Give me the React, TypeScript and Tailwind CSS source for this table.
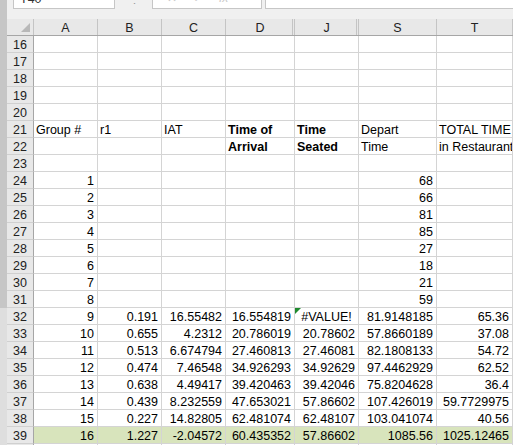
import React from 'react';

type Cell = { v: string; align?: 'l' | 'r' | 'c'; bold?: boolean; err?: boolean };
type Row = { n: number; green?: boolean; cells: Partial<Record<ColKey, Cell>> };
type ColKey = 'A' | 'B' | 'C' | 'D' | 'J' | 'S' | 'T';

const columns: { key: ColKey; w: string; head: string }[] = [
  { key: 'A', w: 'w-[64px]', head: '' },
  { key: 'B', w: 'w-[64px]', head: '' },
  { key: 'C', w: 'w-[64px]', head: '' },
  { key: 'D', w: 'w-[69px]', head: 'shadow-[inset_-1px_0_0_#e8e8e8,inset_-2px_0_0_#c4c4c4]' },
  { key: 'J', w: 'w-[64px]', head: 'shadow-[inset_-1px_0_0_#e8e8e8,inset_-2px_0_0_#c4c4c4]' },
  { key: 'S', w: 'w-[78px]', head: '' },
  { key: 'T', w: 'flex-1 min-w-0', head: '' },
];

const r = (v: string): Cell => ({ v, align: 'r' });
const l = (v: string): Cell => ({ v, align: 'l' });
const b = (v: string): Cell => ({ v, align: 'l', bold: true });

const numbered = [68, 66, 81, 85, 27, 18, 21, 59];

const data: [string, string, string, string, string, string, string][] = [
  ['9', '0.191', '16.55482', '16.554819', '#VALUE!', '81.9148185', '65.36'],
  ['10', '0.655', '4.2312', '20.786019', '20.78602', '57.8660189', '37.08'],
  ['11', '0.513', '6.674794', '27.460813', '27.46081', '82.1808133', '54.72'],
  ['12', '0.474', '7.46548', '34.926293', '34.92629', '97.4462929', '62.52'],
  ['13', '0.638', '4.49417', '39.420463', '39.42046', '75.8204628', '36.4'],
  ['14', '0.439', '8.232559', '47.653021', '57.86602', '107.426019', '59.7729975'],
  ['15', '0.227', '14.82805', '62.481074', '62.48107', '103.041074', '40.56'],
  ['16', '1.227', '-2.04572', '60.435352', '57.86602', '1085.56', '1025.12465'],
];

const rows: Row[] = [];
for (let n = 16; n <= 40; n++) {
  const row: Row = { n, cells: {} };
  if (n === 21) {
    row.cells = { A: l('Group #'), B: l('r1'), C: l('IAT'), D: b('Time of'), J: b('Time'), S: l('Depart'), T: l('TOTAL TIME') };
  } else if (n === 22) {
    row.cells = { D: b('Arrival'), J: b('Seated'), S: l('Time'), T: l('in Restaurant') };
  } else if (n >= 24 && n <= 31) {
    row.cells = { A: r(String(n - 23)), S: r(String(numbered[n - 24])) };
  } else if (n >= 32 && n <= 39) {
    const d = data[n - 32];
    row.cells = {
      A: r(d[0]),
      B: r(d[1]),
      C: r(d[2]),
      D: r(d[3]),
      J: d[4] === '#VALUE!' ? { v: d[4], align: 'c', err: true } : r(d[4]),
      S: r(d[5]),
      T: r(d[6]),
    };
    if (n === 39) row.green = true;
  }
  rows.push(row);
}

const App: React.FC = () => {
  return (
    <div className="flex h-[445px] w-[513px] overflow-hidden bg-white font-['Liberation_Sans',Arial,sans-serif] text-[12.5px] text-black">
      {/* left window edge */}
      <div className="flex w-[7px] shrink-0 flex-col">
        <div className="h-[308px] bg-[#c6c6c6]" />
        <div className="flex-1 bg-[#dedede]" />
      </div>

      <div className="flex min-w-0 flex-1 flex-col">
        {/* formula bar strip */}
        <div className="flex h-[19px] shrink-0 items-start bg-[#f0f0f0]">
          <div className="ml-[6px] h-[9px] w-[102px] overflow-hidden border-x border-b border-[#c6c6c6] bg-white pl-[6px]">
            <div className="-mt-[8px] leading-[14px] text-[#333]">T40</div>
          </div>
          <div className="ml-[14px] -mt-[6px] text-[11px] leading-[12px] text-[#999]">⋮</div>
          <div className="ml-[12px] h-[9px] w-[110px] overflow-hidden border-x border-b border-[#c6c6c6] bg-white">
            <div className="-mt-[9px] flex gap-[16px] pl-[14px] text-[12px] leading-[14px] text-[#c8c8c8]">
              <span>✕</span>
              <span>✓</span>
              <span className="italic">fx</span>
            </div>
          </div>
          <div className="ml-[3px] h-[9px] flex-1 border-b border-l border-[#c6c6c6] bg-white" />
        </div>

        {/* column headers */}
        <div className="flex h-[17px] shrink-0 border-b border-[#a6a6a6] bg-[#e8e8e8]">
          <div className="relative w-[27px] shrink-0 border-r border-[#c4c4c4]">
            <div className="absolute bottom-[3px] right-[3px] h-0 w-0 border-b-[9px] border-l-[9px] border-b-[#b8b8b8] border-l-transparent" />
          </div>
          {columns.map((c) => (
            <div
              key={c.key}
              className={`${c.w} ${c.head} flex shrink-0 items-end justify-center border-r border-[#c4c4c4] leading-[14px] text-[#222]`}
            >
              {c.key}
            </div>
          ))}
        </div>

        {/* rows */}
        {rows.map((row) => (
          <div key={row.n} className="flex h-[17px] shrink-0">
            <div className="flex w-[27px] shrink-0 items-end justify-center border-b border-r border-b-[#d0d0d0] border-r-[#a6a6a6] bg-[#e8e8e8] leading-[14px] text-[#222]">
              {row.n}
            </div>
            {columns.map((c) => {
              const cell = row.cells[c.key];
              const align =
                cell?.align === 'r' ? 'justify-end pr-[3px]' : cell?.align === 'c' ? 'justify-center' : 'justify-start pl-[2px]';
              return (
                <div
                  key={c.key}
                  className={`${c.w} relative flex shrink-0 items-end overflow-hidden whitespace-nowrap border-b border-r border-[#d4d4d4] leading-[14px] ${align} ${
                    row.green ? 'bg-[#d8e4bc]' : ''
                  } ${cell?.bold ? 'font-bold' : ''}`}
                >
                  {cell?.err && (
                    <div className="absolute left-0 top-0 h-0 w-0 border-r-[6px] border-t-[6px] border-r-transparent border-t-[#1e8a2e]" />
                  )}
                  {cell?.v}
                </div>
              );
            })}
          </div>
        ))}
      </div>
    </div>
  );
};

export default App;
